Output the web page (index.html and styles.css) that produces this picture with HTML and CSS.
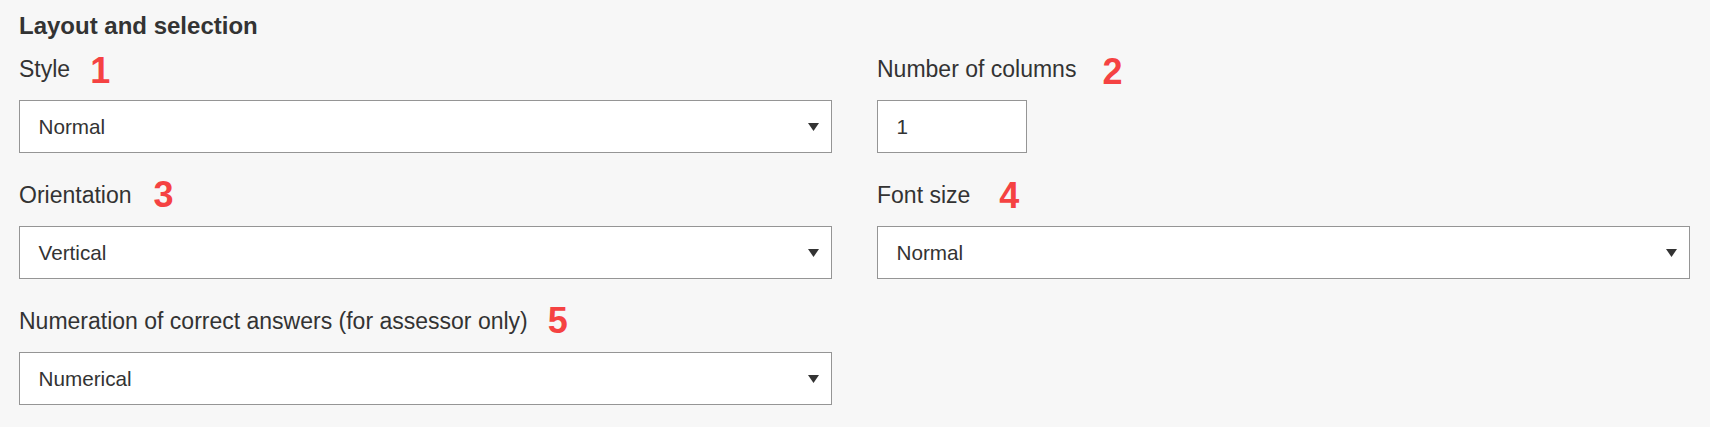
FILE: index.html
```html
<!DOCTYPE html>
<html lang="en">
<head>
<meta charset="utf-8">
<title>Layout and selection</title>
<link rel="stylesheet" href="styles.css">
</head>
<body>
<main class="panel">
  <h2 class="title">Layout and selection</h2>
  <div class="grid">
    <div class="field">
      <div class="label">Style<span class="mark mark-1">1</span></div>
      <div class="select">
        <span class="value">Normal</span>
        <svg class="caret" width="11" height="8" viewBox="0 0 11 8"><polygon points="0,0 11,0 5.5,8"/></svg>
      </div>
    </div>
    <div class="field">
      <div class="label">Number of columns<span class="mark mark-2">2</span></div>
      <div class="input"><span class="value">1</span></div>
    </div>
    <div class="field">
      <div class="label">Orientation<span class="mark mark-3">3</span></div>
      <div class="select">
        <span class="value">Vertical</span>
        <svg class="caret" width="11" height="8" viewBox="0 0 11 8"><polygon points="0,0 11,0 5.5,8"/></svg>
      </div>
    </div>
    <div class="field">
      <div class="label">Font size<span class="mark mark-4">4</span></div>
      <div class="select">
        <span class="value">Normal</span>
        <svg class="caret" width="11" height="8" viewBox="0 0 11 8"><polygon points="0,0 11,0 5.5,8"/></svg>
      </div>
    </div>
    <div class="field">
      <div class="label">Numeration of correct answers (for assessor only)<span class="mark mark-5">5</span></div>
      <div class="select">
        <span class="value">Numerical</span>
        <svg class="caret" width="11" height="8" viewBox="0 0 11 8"><polygon points="0,0 11,0 5.5,8"/></svg>
      </div>
    </div>
  </div>
</main>
</body>
</html>
```

FILE: styles.css
```css
html, body {
  margin: 0;
  padding: 0;
  background: #f7f7f7;
}

body {
  font-family: "Liberation Sans", Arial, sans-serif;
  color: #333333;
}

.panel {
  padding: 12px 20px 0 19px;
}

.title {
  margin: 0 0 16px;
  font-size: 24px;
  line-height: 28px;
  font-weight: 700;
  color: #333333;
}

.grid {
  display: grid;
  grid-template-columns: 1fr 1fr;
  column-gap: 45px;
  row-gap: 29px;
}

.label {
  font-size: 23px;
  line-height: 26px;
  margin-bottom: 18px;
  white-space: nowrap;
}

.mark {
  font-size: 36px;
  line-height: 0;
  font-weight: 700;
  color: #f54242;
  vertical-align: -5px;
}

.mark-1 { margin-left: 20px; vertical-align: -6px; }
.mark-2 { margin-left: 26px; vertical-align: -7px; }
.mark-3 { margin-left: 22px; vertical-align: -4px; }
.mark-4 { margin-left: 29px; vertical-align: -5px; }
.mark-5 { margin-left: 20px; vertical-align: -4px; }

.select,
.input {
  box-sizing: border-box;
  height: 53px;
  border: 1px solid #959595;
  background: #ffffff;
  display: flex;
  align-items: center;
  font-size: 20.7px;
  color: #333333;
}

.select {
  justify-content: space-between;
  padding: 0 12px 0 18.5px;
}

.input {
  width: 150px;
  padding: 0 0 0 18.5px;
}

.value {
  padding-top: 0;
}

.caret {
  display: block;
  fill: #333333;
}
```
